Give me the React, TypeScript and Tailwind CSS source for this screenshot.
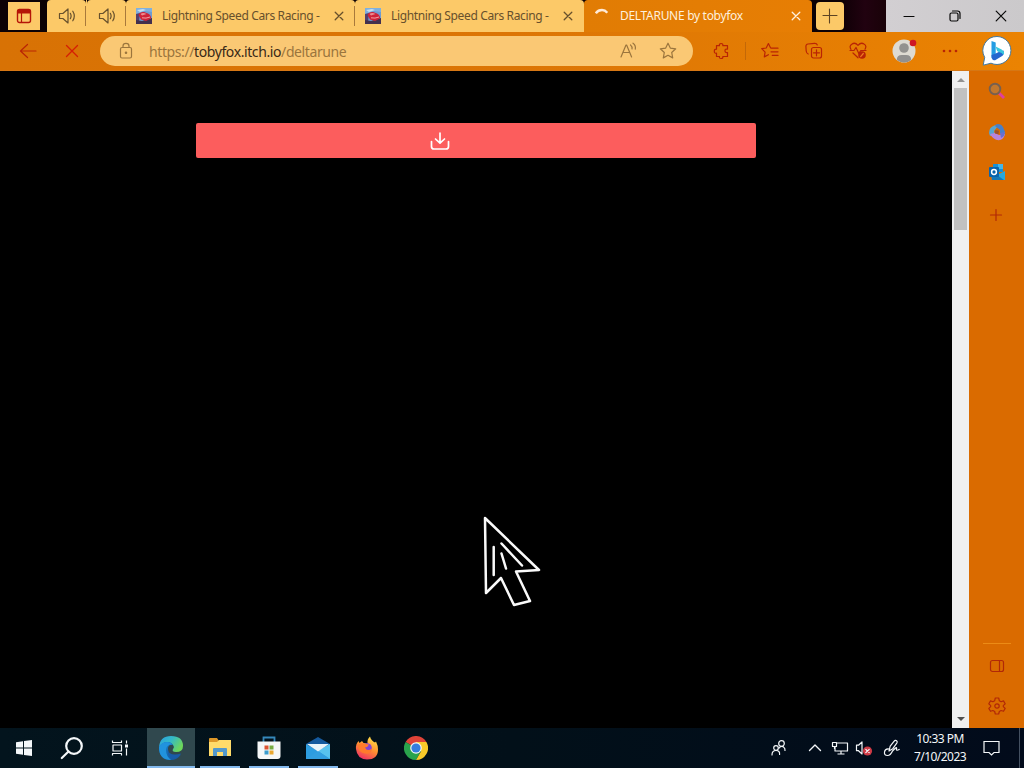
import type { ReactNode } from 'react'
import clsx from 'clsx'

interface IconProps {
  w?: number
  h?: number
  className?: string
  children: ReactNode
}

function Icon({ w = 16, h = 16, className, children }: IconProps) {
  return (
    <svg
      width={w}
      height={h}
      viewBox={`0 0 ${w} ${h}`}
      fill="none"
      stroke="currentColor"
      strokeWidth={1.2}
      strokeLinecap="round"
      strokeLinejoin="round"
      className={clsx('shrink-0', className)}
    >
      {children}
    </svg>
  )
}

const CloseIcon = ({ className }: { className?: string }) => (
  <Icon w={10} h={10} className={className}>
    <path d="M1.2 1.2l7.6 7.6M8.8 1.2L1.2 8.8" strokeWidth={1.3} />
  </Icon>
)

const SpeakerIcon = () => (
  <Icon w={18} h={18}>
    <path d="M1.5 6.5h3.4L10 2v14l-5.1-4.5H1.5z" />
    <path d="M12.3 6.3q1.6 2.7 0 5.4M14.8 4.2q3 4.8 0 9.6" />
  </Icon>
)

const CarIcon = () => (
  <svg width="16" height="16" viewBox="0 0 16 16" className="shrink-0">
    <rect width="16" height="16" rx="1.5" fill="#6f9bd0" />
    <path d="M0 0h16v4L9 3 0 6z" fill="#7fb0df" />
    <path d="M1 2l6-1 3 1-6 2z" fill="#c7deee" />
    <path d="M0 6l4-1-1 9H0z" fill="#54406c" />
    <path d="M0 12l6 1 10-3v6H0z" fill="#43304e" />
    <path d="M2.5 7Q4 3.5 8 4l4 1.5q3.4 2 3 5L10 13l-5-1.5z" fill="#cf2339" />
    <path d="M4.5 6q2.5-2 6 0L6 7.5z" fill="#ec8d90" />
    <path d="M6 9.8q4 1 8-.8" stroke="#f3a1a4" fill="none" />
  </svg>
)

const StarIcon = () => (
  <Icon w={18} h={18}>
    <path d="M9 1.2l2.3 4.9 5.4.7-4 3.7 1 5.4L9 13.3l-4.7 2.6 1-5.4-4-3.7 5.4-.7z" />
  </Icon>
)

function MediaTab() {
  return (
    <div className="flex h-full w-[39px] items-center justify-center rounded-t border-l border-transparent bg-[#fcc968]">
      <SpeakerIcon />
    </div>
  )
}

function Divider() {
  return <div className="relative -ml-px h-[20px] w-px shrink-0 bg-[#a8793b]" />
}

function RacingTab() {
  return (
    <div className="flex h-full w-[229px] items-center rounded-t bg-[#fcc968] pl-[10px]">
      <CarIcon />
      <span className="ml-[10px] w-[160px] text-[12px] tracking-[-0.36px] whitespace-nowrap text-[#67502c]">
        Lightning Speed Cars Racing -
      </span>
      <CloseIcon className="ml-[12px]" />
    </div>
  )
}

function TabStrip() {
  return (
    <div className="flex h-8 items-center bg-[#0c0105] text-[#67502c]">
      <div className="ml-2 flex h-7 w-8 items-center justify-center bg-[#fcc968] text-[#b51608]">
        <Icon w={16} h={16}>
          <rect x="1.5" y="1.5" width="13" height="13" rx="2" strokeWidth={1.4} />
          <path d="M2 2h12v3H2z" fill="currentColor" />
          <path d="M5.5 5v9" />
        </Icon>
      </div>
      <div className="ml-[7px] flex h-full items-center">
        <MediaTab />
        <Divider />
        <div className="h-full w-px bg-[#fcc968]" />
        <MediaTab />
        <Divider />
        <RacingTab />
        <Divider />
        <RacingTab />
      </div>
      <div className="flex h-full w-[228px] items-center rounded-t bg-gradient-to-r from-[#e17c04] to-[#e77e04] pl-[11px] text-[#fff0dc]">
        <Icon w={14} h={16}>
          <path d="M.8 5.2Q3 2 7 2q3 0 5.3 2.7" strokeWidth={2.4} strokeLinecap="butt" stroke="#ffead7" />
        </Icon>
        <span className="ml-[11px] w-[171px] text-[12px] tracking-[-0.3px] whitespace-nowrap">DELTARUNE by tobyfox</span>
        <CloseIcon />
      </div>
      <div className="ml-1 flex h-7 w-7 items-center justify-center rounded-sm bg-[#fcc968] text-[#5c4323]">
        <Icon w={16} h={16}>
          <path d="M1 7.5h14M7.5 1v14" strokeWidth={1.1} />
        </Icon>
      </div>
      <div className="h-full w-[42px] bg-gradient-to-r from-[#110007] via-[#210210] to-[#190208]" />
      <div className="flex h-full flex-1 items-center justify-around bg-gradient-to-r from-[#d2cfd2] to-[#cbc9cb] text-[#080808]">
        <Icon w={12} h={12}>
          <path d="M1 6.5h10" />
        </Icon>
        <Icon w={12} h={12}>
          <rect x="1" y="3" width="8" height="8" rx="1.5" />
          <path d="M3.5 1h5Q11 1 11 3.5v5" />
        </Icon>
        <Icon w={12} h={12}>
          <path d="M1.2 1.2l9.6 9.6M10.8 1.2l-9.6 9.6" />
        </Icon>
      </div>
    </div>
  )
}

function ToolButton({ children }: { children: ReactNode }) {
  return <div className="flex h-full w-11 shrink-0 items-center justify-center">{children}</div>
}

const BingIcon = () => (
  <svg width="32" height="32" viewBox="0 0 32 32" className="shrink-0">
    <path
      d="M16 1.5a14 14 0 1 1-6 26.7l-7.8 2 1.5-7.8A14 14 0 0 1 16 1.5z"
      fill="#fff"
      stroke="#4279a0"
      strokeWidth="1"
    />
    <path d="M10.5 6l4.2 1.6v10.8l-4.2 5z" fill="#249de3" />
    <path d="M10.5 20l4.2-1.5 3-1.6 4.8-1.5q1.4 4-2.2 6.2l-6.2 3.6q-3.6 1-3.6-5.2z" fill="#2567ce" />
    <path d="M14.6 11.6l6 2.8q4 2.8 1.7 5.3-1-2-4.6-2.8l-1.6-1z" fill="#38c8de" />
  </svg>
)

function Toolbar() {
  return (
    <div className="flex h-[39px] items-center border-b border-[#d67714] bg-gradient-to-r from-[#d87205] via-[#dc7505] to-[#eb8302] pl-[6px] text-[#b92405]">
      <ToolButton>
        <Icon w={18} h={16}>
          <path d="M17 8H1.5M8.5 1.5L1.5 8l7 6.5" />
        </Icon>
      </ToolButton>
      <ToolButton>
        <Icon w={14} h={14} className="text-[#d51e05]">
          <path d="M1.5 1.5l11 11M12.5 1.5l-11 11" strokeWidth={1.3} />
        </Icon>
      </ToolButton>
      <div className="ml-[6px] flex h-[30px] w-[593px] shrink-0 items-center rounded-full bg-[#fac874] pl-[19px] text-[#9b753d]">
        <Icon w={14} h={18}>
          <rect x="1.5" y="5.5" width="11" height="10.5" rx="1.5" />
          <path d="M4 5.5V4q0-2.7 3-2.7T10 4v1.5" />
          <circle cx="7" cy="10.8" r=".7" fill="currentColor" />
        </Icon>
        <span className="ml-4 w-[471px] text-[14px] tracking-[-0.4px] whitespace-nowrap text-[#9b753d]">
          https://<span className="text-[#392817]">tobyfox.itch.io</span>/deltarune
        </span>
        <div className="flex w-4 items-center">
          <Icon w={18} h={18}>
            <path d="M1 15L6 3h.6l5 12M3 10.5h6.5M10.5 3q2 1.7 1.5 4M13 1.2q3 2.2 2.3 6" />
          </Icon>
        </div>
        <div className="ml-[23px]">
          <StarIcon />
        </div>
      </div>
      <div className="ml-[7px] flex h-full items-center">
        <ToolButton>
          <Icon w={18} h={18}>
            <path d="M3.5 3.7h3q-.6-2.2 1.6-2.2t1.7 2.2h4.7v3.4q-2.5-.4-2.5 1.7t2.5 1.8v3.9H9.8q.4 2-1.7 2t-1.6-2h-3v-3.3q-2.2.3-2.2-2t2.2-2z" />
          </Icon>
        </ToolButton>
        <div className="ml-px h-[18px] w-px bg-[#c36807]" />
        <div className="ml-[2px] flex">
          <ToolButton>
            <Icon w={18} h={18}>
              <path d="M10.7 6.1L9.5 5.8 7.4 1.6 5.2 6l-4.5.7 3.4 3.4-.8 4.8 4.1-2.2M10.8 6.2H17M10 9.8h7M11.3 13.4H17" />
            </Icon>
          </ToolButton>
          <ToolButton>
            <Icon w={18} h={18}>
              <rect x="6.5" y="5.5" width="10" height="10.5" rx="2" />
              <path d="M3.2 12Q1.5 11.4 1.2 9L.9 4.6Q.8 2.2 3 2l6.5-.7Q11.7 1.1 12.3 3M11.5 7.8v6M8.5 10.8h6" />
            </Icon>
          </ToolButton>
          <ToolButton>
            <Icon w={18} h={18}>
              <path d="M2 7.5Q-.2 3.8 3 2.1 6-.1 9 3.4q3-3.5 6-1.3 3.1 1.9 1 5.2M1 8.5h4l2-3 2.8 6 2-3H17M4 11l5 4.8" />
              <circle cx="13" cy="13" r="3.8" fill="currentColor" stroke="none" />
              <path d="M11.7 14.6l2.6-3.1" stroke="#ee7d20" />
            </Icon>
          </ToolButton>
        </div>
        <ToolButton>
          <svg width="24" height="24" viewBox="0 0 24 24" className="ml-1 overflow-visible">
            <circle cx="12" cy="12" r="11.5" fill="#dedbd2" />
            <circle cx="12" cy="9" r="4.8" fill="#93928f" />
            <path d="M4.8 21q0-5 5-5h4.4q5 0 5 5-7 5-14.4 0z" fill="#92918f" />
            <circle cx="21" cy="4" r="3.3" fill="#cf1724" />
          </svg>
        </ToolButton>
        <ToolButton>
          <Icon w={16} h={4} className="ml-[7px]">
            <g fill="currentColor" stroke="none">
              <circle cx="2" cy="2" r="1.3" />
              <circle cx="8" cy="2" r="1.3" />
              <circle cx="14" cy="2" r="1.3" />
            </g>
          </Icon>
        </ToolButton>
        <ToolButton>
          <div className="ml-[13px]">
            <BingIcon />
          </div>
        </ToolButton>
      </div>
    </div>
  )
}

function Page() {
  return (
    <main className="relative w-[952px] bg-black pt-[52px]">
      <div className="mx-auto flex h-[35px] w-[560px] items-center justify-center rounded-[2px] bg-[#fc5d5d] pr-[72px] text-white">
        <Icon w={20} h={20}>
          <path d="M10 2v10M5.5 8L10 12.2 14.5 8M1.5 10.5v5q0 2.5 2.5 2.5h12q2.5 0 2.5-2.5v-5" strokeWidth={1.7} />
        </Icon>
      </div>
      {/* oversized mouse pointer hovering over the page */}
      <svg
        className="absolute top-[429px] left-[460px]"
        width="110"
        height="120"
        viewBox="0 0 110 120"
        fill="none"
        stroke="#fafafa"
        strokeWidth="2.5"
        strokeLinejoin="round"
        strokeLinecap="round"
      >
        <path d="M25 18L79 70 56 71.5 70 101 54 105 41 78 26 93z" />
        <path d="M33.7 47v28M41.5 53.5l4.5 15M41.5 43.5L62 65.5" />
      </svg>
    </main>
  )
}

function Scrollbar() {
  return (
    <div className="flex w-[17px] flex-col items-center bg-[#f0f0f0] text-[#505050]">
      <div className="flex h-[17px] items-center">
        <svg width="8" height="5" viewBox="0 0 8 5">
          <path d="M0 5l4-4 4 4z" fill="#929292" />
        </svg>
      </div>
      <div className="h-[142px] w-[13px] bg-[#c1c1c1]" />
      <div className="mt-auto flex h-[17px] items-center">
        <svg width="8" height="5" viewBox="0 0 8 5">
          <path d="M0 0l4 4 4-4z" fill="currentColor" />
        </svg>
      </div>
    </div>
  )
}

function Sidebar() {
  return (
    <aside className="flex w-[55px] flex-col items-center bg-[#da6b00] pt-[11px] text-[#b12807]">
      <svg width="18" height="18" viewBox="0 0 18 18">
        <path d="M11 11l5 5" stroke="#dd3fa0" strokeWidth="2.8" />
        <circle cx="7" cy="7" r="5.3" fill="#c2782d" stroke="#766050" strokeWidth="1.9" />
      </svg>
      <svg width="18" height="18" viewBox="0 0 18 18" className="mt-[23px]">
        <path d="M1 10q0-6 6-7.8Q9 1 10 3L6 8l1 4-5 1z" fill="#58a5cf" />
        <path d="M8 1.5q5-1.5 7 2.5l2 5-1 4-4-3V7L7 3z" fill="#487fc9" />
        <path d="M2 11l5-1 4 2 6-1q-1 5-5 6-6 1-10-6z" fill="#b884dc" />
        <path d="M12 10l5-1-1 4-3 2z" fill="#6770d1" />
        <path d="M7.2 7L11 7.8l-.6 3.4-3.4-.8z" fill="#9b5230" />
      </svg>
      <svg width="18" height="18" viewBox="0 0 18 18" className="mt-[22px]">
        <path d="M5 1h10v8H5z" fill="#1690d7" />
        <path d="M10 1h5v5h-5z" fill="#45b6e8" />
        <path d="M3 8l6 4 8-4v9H4z" fill="#28a8dd" />
        <path d="M3 8l13 9H4z" fill="#1678b5" />
        <rect x="1" y="4" width="10" height="10" rx="1" fill="#0864ac" />
        <circle cx="6" cy="9" r="2.4" fill="none" stroke="#fff" strokeWidth="1.5" />
      </svg>
      <Icon w={14} h={14} className="mt-[27px] mr-px">
        <path d="M7 1.5v11M1.5 7h11" />
      </Icon>
      <div className="mt-auto h-px w-7 bg-[#ec8b16]" />
      <Icon w={16} h={14} className="mt-[15px]">
        <rect x="1.5" y="1.5" width="13" height="11" rx="2" />
        <path d="M10.5 2v10" />
      </Icon>
      <Icon w={20} h={20} className="mt-[23px] mb-[12px]">
        <path d="M8.3 2h3.4l.6 2.7 1.8 1 2.4-.8 1.7 2.9-1.9 1.8v1l1.9 1.8-1.7 2.9-2.4-.8-1.8 1-.6 2.5H8.3l-.6-2.5-1.8-1-2.4.8-1.7-2.9 1.9-1.8v-1L1.8 7.8l1.7-2.9 2.4.8 1.8-1z" />
        <circle cx="10" cy="10" r="2.2" />
      </Icon>
    </aside>
  )
}

interface TaskAppProps {
  open?: boolean
  children: ReactNode
}

function TaskApp({ open, children }: TaskAppProps) {
  return (
    <div className="flex h-full w-[49px] flex-col items-center">
      <div className="flex flex-1 items-center">{children}</div>
      <div className={clsx('-mt-0.5 h-0.5 w-10', open && 'bg-[#83b9ee]')} />
    </div>
  )
}

const EdgeIcon = () => (
  <svg width="26" height="26" viewBox="0 0 26 26">
    <defs>
      <linearGradient id="edgeTop" x1="0" y1="0" x2="1" y2=".5">
        <stop stopColor="#2a9fdf" />
        <stop offset=".5" stopColor="#34b9c8" />
        <stop offset="1" stopColor="#6dd75b" />
      </linearGradient>
      <linearGradient id="edgeBase" x1="0" y1="0" x2="1" y2="1">
        <stop stopColor="#1783cf" />
        <stop offset="1" stopColor="#155499" />
      </linearGradient>
    </defs>
    <path d="M1 12Q2 1 13 1q12 0 12 10 0 6-7 6-4.5 0-3-3 2-2-.5-4.500Q8 4 1 12z" fill="url(#edgeTop)" />
    <path d="M1 12Q4 7 9.500 7q4 0 5.500 3-4-1-5 3-.5 6 5 8 4 1 8-1.500Q19 25 13 25 1 25 1 12z" fill="url(#edgeBase)" />
    <path d="M1 12q2.500-5 8.500-5 3 0 5 2.500-6-.5-6.500 5.500 0 6 5 10Q1 25 1 12z" fill="#2193de" />
    <path d="M10 14.500q.5 5 7 5 3 0 6-1-2.500 5-9 5.500-5-4-4-9.500z" fill="#185ca8" />
  </svg>
)

const FirefoxIcon = () => (
  <svg width="24" height="24" viewBox="0 0 24 24">
    <defs>
      <linearGradient id="fox" x1=".8" y1="0" x2=".3" y2="1">
        <stop stopColor="#ffe64a" />
        <stop offset=".5" stopColor="#ff9130" />
        <stop offset="1" stopColor="#f02e64" />
      </linearGradient>
    </defs>
    <path d="M1 13Q.5 8 3.500 5l1 2L7 5l1.500 2 4 .5Q12 3 15 .5q1 4 5 6l1-1q2 4 2 8 0 10-11 10Q2 23 1 13z" fill="url(#fox)" />
    <circle cx="12" cy="12" r="4.8" fill="#8144d4" />
    <path d="M3 9q3-3 6-1.500l5 1q-1 2.500-4 3 2 4.500 7 1-1 6-6.500 5Q3 17 3 9z" fill="#ff7b2b" />
  </svg>
)

const ChromeIcon = () => (
  <svg width="24" height="24" viewBox="0 0 24 24">
    <path d="M12 12L1.600 6a12 12 0 0 1 20.800 0z" fill="#df4338" />
    <path d="M12 12L1.600 6A12 12 0 0 0 12 24l5-9z" fill="#2aa34c" />
    <path d="M12 12V6h10.400A12 12 0 0 1 12 24l5.200-9z" fill="#f9ca29" />
    <circle cx="12" cy="12" r="5.8" fill="#f4f5f6" />
    <circle cx="12" cy="12" r="4.6" fill="#347ede" />
  </svg>
)

function Taskbar() {
  return (
    <footer className="flex h-10 items-center bg-gradient-to-r from-[#03141d] via-[#021019] to-[#020b1b] text-[#f4f7f9]">
      <div className="flex w-12 justify-center">
        <svg width="16" height="16" viewBox="0 0 16 16" fill="currentColor">
          <path d="M0 2.200L7 1.200v6.300H0zM8 1l8-1v7.500H8zM0 8.500h7v6.300l-7-1zM8 8.500h8V16l-8-1z" />
        </svg>
      </div>
      <div className="flex w-12 justify-center">
        <Icon w={24} h={24}>
          <circle cx="14" cy="10" r="7.8" strokeWidth={2.2} />
          <path d="M8.500 15.500L1.800 22" strokeWidth={2.2} />
        </Icon>
      </div>
      <div className="flex w-[51px] justify-center pr-[3px]">
        <Icon w={18} h={18}>
          <path d="M1.500 1.500v2h9v-2M1.500 16.500v-2h9v2M2 6h8.500v6H2zM15.500 1.500v3M15.500 9.500v7" strokeLinecap="butt" />
          <rect x="14" y="5.500" width="3" height="3" fill="currentColor" stroke="none" />
        </Icon>
      </div>
      <div className="flex h-full w-12 items-center justify-center border-b-2 border-[#83b9ee] bg-[#30484e] pt-[2px]">
        <EdgeIcon />
      </div>
      <TaskApp open>
        <svg width="24" height="22" viewBox="0 0 24 22">
          <path d="M1 2q0-1 1-1h7l2 3h11v4H1z" fill="#dd9728" />
          <path d="M1 5h8l2-2h12v16H1z" fill="#ffdb6a" />
          <path d="M5 19v-7q0-1 1-1h12q1 0 1 1v7h-4v-4H9v4z" fill="#5298cb" />
        </svg>
      </TaskApp>
      <TaskApp open>
        <svg width="24" height="24" viewBox="0 0 24 24">
          <path d="M6.500 7V1.500h11V7" fill="none" stroke="#3588bb" strokeWidth="1.8" />
          <path d="M.5 5.500h23V20q0 3-3 3h-17q-3 0-3-3z" fill="#f5f7f8" />
          <path d="M7.500 9.500h4v4h-4z" fill="#dc5432" />
          <path d="M12.500 9.500h4v4h-4z" fill="#77ac42" />
          <path d="M7.500 14.500h4v4h-4z" fill="#3b9cce" />
          <path d="M12.500 14.500h4v4h-4z" fill="#eaa831" />
        </svg>
      </TaskApp>
      <TaskApp open>
        <svg width="24" height="24" viewBox="0 0 24 24">
          <path d="M0 8l12-7 12 7-12 9z" fill="#155a9e" />
          <path d="M0 8l12 7L24 8v15H0z" fill="#2d9de0" />
          <path d="M24 8v15L12 15z" fill="#58c3ee" />
          <path d="M0 23l12-8 12 8z" fill="#329fe0" />
          <path d="M1 8h22l-11 7.500z" fill="#e9f4f9" />
        </svg>
      </TaskApp>
      <TaskApp>
        <FirefoxIcon />
      </TaskApp>
      <TaskApp>
        <ChromeIcon />
      </TaskApp>

      <div className="ml-auto flex h-full items-center">
        <Icon w={18} h={18}>
          <circle cx="11.5" cy="4.5" r="2.8" />
          <circle cx="6" cy="9" r="2.3" />
          <path d="M2 16q0-4.500 4-4.500t3.600 4M9 9.200q2-2.600 4.500-1.300 1.800 1 1.500 3.600" />
        </Icon>
        <Icon w={14} h={10} className="ml-5">
          <path d="M1.500 7.500L7 2l5.500 5.500" strokeWidth={1.4} />
        </Icon>
        <Icon w={18} h={16} className="ml-[9px]">
          <path d="M5.500 3H16.500v8H4V7M10 11v3M6.500 14h7M1.500 2.500h4v4h-4zM3.500 6.500V9" strokeLinecap="butt" />
        </Icon>
        <Icon w={18} h={18} className="ml-[6px]">
          <path d="M1.500 6.200h2L7 3v12l-3.500-3.300h-2z" />
          <circle cx="12.500" cy="12" r="4.6" fill="#cf3a45" stroke="none" />
          <path d="M10.800 10.300l3.400 3.400M14.200 10.300l-3.400 3.400" />
        </Icon>
        <Icon w={18} h={18} className="ml-[10px]">
          <path d="M6 12l1.200-4.800 4-5q1.200-1.500 2.400-.5t.2 2.500l-4 5.500zM6 10q-4-.5-4.500 3t3 3.500q3 0 5-4.500l3-3q1.500-1.200 1 1t2.700.5" />
        </Icon>
        <div className="ml-[11px] w-[56px] text-center text-[12px] leading-[18px] tracking-[-0.55px] whitespace-nowrap">
          <div>10:33 PM</div>
          <div>7/10/2023</div>
        </div>
        <Icon w={18} h={18} className="ml-[15px]">
          <path d="M1 2.500h15v11h-5L8.500 16 6 13.500H1z" strokeLinejoin="miter" />
        </Icon>
        <div className="mr-1 ml-[18px] h-full w-px bg-[#445061]" />
      </div>
    </footer>
  )
}

export default function App() {
  return (
    <div className="flex h-[768px] w-[1024px] flex-col overflow-hidden bg-black font-['Noto_Sans',sans-serif]">
      <TabStrip />
      <Toolbar />
      <div className="flex h-[657px]">
        <Page />
        <Scrollbar />
        <Sidebar />
      </div>
      <Taskbar />
    </div>
  )
}
